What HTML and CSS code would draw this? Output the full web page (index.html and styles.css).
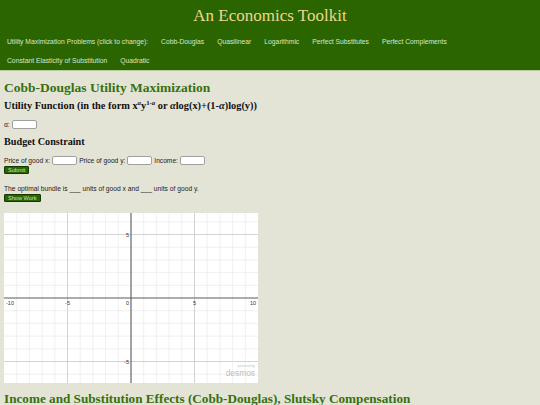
FILE: index.html
```html
<!DOCTYPE html>
<html>
<head>
<meta charset="utf-8">
<link rel="stylesheet" href="styles.css">
</head>
<body>
<header class="site-header">
  <div class="site-title">An Economics Toolkit</div>
  <nav class="nav">
    <span class="nav-item">Utility Maximization Problems (click to change):</span>
    <a class="nav-item">Cobb-Douglas</a>
    <a class="nav-item">Quasilinear</a>
    <a class="nav-item">Logarithmic</a>
    <a class="nav-item">Perfect Substitutes</a>
    <a class="nav-item">Perfect Complements</a>
    <a class="nav-item">Constant Elasticity of Substitution</a>
    <a class="nav-item">Quadratic</a>
  </nav>
</header>
<main class="content">
  <h1 class="page-title">Cobb-Douglas Utility Maximization</h1>
  <h2 class="sub-title">Utility Function (in the form x<sup><i>a</i></sup>y<sup>1-<i>a</i></sup> or <i>α</i>log(x)+(1-<i>α</i>)log(y))</h2>
  <div class="field-row"><span>α:</span><span class="input"></span></div>
  <h3 class="section-title">Budget Constraint</h3>
  <div class="field-row"><span>Price of good x:</span><span class="input"></span><span>Price of good y:</span><span class="input"></span><span>Income:</span><span class="input"></span></div>
  <div class="btn-row"><span class="btn">Submit</span></div>
  <div class="text-row">The optimal bundle is ___ units of good x and ___ units of good y.</div>
  <div class="btn-row"><span class="btn">Show Work</span></div>
  <div class="graph">
    <svg width="254" height="170" viewBox="0 0 254 170">
      <rect width="254" height="170" fill="#ffffff"/>
      <path d="M12.7 0V170M25.4 0V170M38.1 0V170M50.8 0V170M76.2 0V170M88.9 0V170M101.6 0V170M114.3 0V170M139.7 0V170M152.4 0V170M165.1 0V170M177.8 0V170M203.2 0V170M215.9 0V170M228.6 0V170M241.3 0V170M0 8.8H254M0 34.2H254M0 46.9H254M0 59.6H254M0 72.3H254M0 97.7H254M0 110.4H254M0 123.1H254M0 135.8H254M0 161.2H254" stroke="#ececec" stroke-width="0.8" fill="none"/>
      <path d="M63.5 0V170M190.5 0V170M0 21.5H254M0 148.5H254" stroke="#c8c8c8" stroke-width="0.8" fill="none"/>
      <path d="M127 0V170M0 85H254" stroke="#5a5a5a" stroke-width="1.1" fill="none"/>
      <g class="tick" font-family="Liberation Sans, Arial, sans-serif" font-size="5.5" fill="#333">
        <text x="125" y="23.5" text-anchor="end">5</text>
        <text x="125" y="150.5" text-anchor="end">-5</text>
        <text x="2" y="91.5">-10</text>
        <text x="63.5" y="91.5" text-anchor="middle">-5</text>
        <text x="125" y="91.5" text-anchor="end">0</text>
        <text x="190.5" y="91.5" text-anchor="middle">5</text>
        <text x="252" y="91.5" text-anchor="end">10</text>
      </g>
      <text x="251" y="154" text-anchor="end" font-family="Liberation Sans, Arial, sans-serif" font-size="3.4" fill="#c4c4c4">powered by</text>
      <text x="251" y="162.5" text-anchor="end" font-family="Liberation Sans, Arial, sans-serif" font-size="8.4" fill="#bdbdbd">desmos</text>
    </svg>
  </div>
  <h1 class="page-title bottom-title">Income and Substitution Effects (Cobb-Douglas), Slutsky Compensation</h1>
</main>
</body>
</html>
```
FILE: styles.css
```css
html, body {
  margin: 0;
  padding: 0;
}
body {
  background: #e4e4d6;
  font-family: "Liberation Sans", Arial, sans-serif;
  color: #111;
  width: 540px;
  height: 405px;
  overflow: hidden;
}
.site-header {
  background: #2b6500;
  border-bottom: 1px solid #b9cba0;
  height: 71px;
  box-sizing: border-box;
  padding-top: 5px;
}
.site-title {
  font-family: "Liberation Serif", "Times New Roman", serif;
  font-size: 17px;
  line-height: 22px;
  color: #ead98e;
  text-align: center;
}
.nav {
  margin-top: 5px;
  padding-left: 7px;
  display: flex;
  flex-wrap: wrap;
  column-gap: 13px;
  width: 470px;
}
.nav-item {
  font-size: 6.75px;
  line-height: 19px;
  color: #d9e6c8;
  text-decoration: none;
}
.content {
  padding: 0 4px;
}
.page-title {
  font-family: "Liberation Serif", "Times New Roman", serif;
  font-weight: bold;
  font-size: 13.5px;
  line-height: 18px;
  color: #37700f;
  margin: 8px 0 0;
}
.sub-title {
  font-family: "Liberation Serif", "Times New Roman", serif;
  font-weight: bold;
  font-size: 10.35px;
  line-height: 14px;
  margin: 2px 0 0;
  color: #111;
}
.sub-title sup {
  font-size: 6.8px;
  line-height: 0;
  vertical-align: 4px;
}
.field-row {
  display: flex;
  align-items: center;
  gap: 2px;
  font-size: 6.65px;
  color: #222;
  height: 10px;
  margin-top: 6px;
}
.input {
  display: inline-block;
  width: 23px;
  height: 7px;
  background: #fff;
  border: 1px solid #a0a0a0;
  border-radius: 2px;
}
.section-title {
  font-family: "Liberation Serif", "Times New Roman", serif;
  font-weight: bold;
  font-size: 10.2px;
  line-height: 14px;
  margin: 6px 0 0;
  color: #111;
}
.section-title + .field-row {
  margin-top: 6px;
}
.btn-row {
  margin-top: 1px;
  height: 8px;
  display: flex;
}
.btn {
  display: inline-block;
  background: #2b6500;
  border: 1px solid #163800;
  border-radius: 1px;
  color: #cfe0bd;
  font-size: 5.6px;
  line-height: 6px;
  padding: 0 3px;
}
.text-row {
  font-size: 6.7px;
  line-height: 10px;
  margin-top: 10px;
  color: #222;
}
.text-row + .btn-row {
  margin-top: 0;
}
.graph {
  margin-top: 11px;
  width: 254px;
  height: 170px;
}
.graph svg {
  display: block;
}
.bottom-title {
  margin-top: 7px;
  font-size: 13.2px;
}
```
